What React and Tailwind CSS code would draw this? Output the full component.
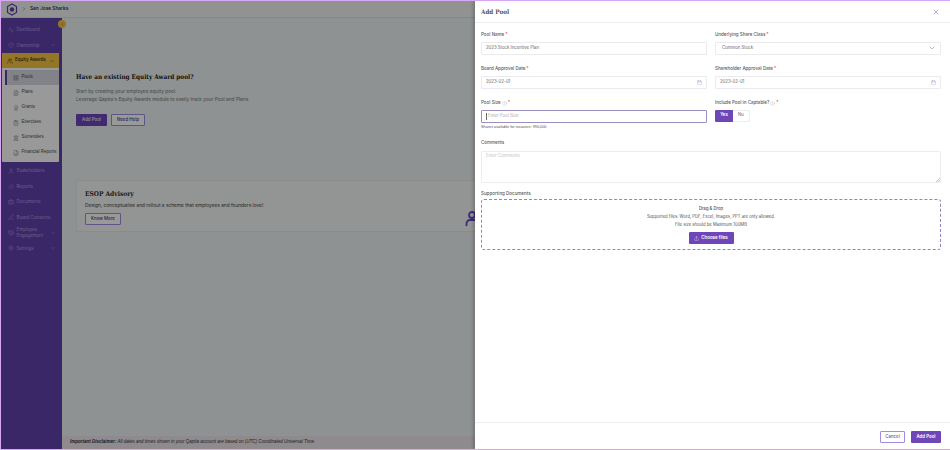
import { Activity, PieChart, Users, LayoutGrid, FileText, Award, ClipboardList, Landmark, FileBarChart, User, BarChart2, Briefcase, PenLine, Handshake, Settings, ChevronDown, ChevronUp, ChevronLeft, ChevronRight, Calendar, X, Upload, HelpCircle } from "lucide-react";

const font = "font-['Inter','Noto_Sans',sans-serif]";
const slab = "font-['DejaVu_Serif_Condensed','DejaVu_Serif',serif]";

function NavItem({ icon: Icon, label, arrow }) {
  return (
    <div className="h-[15.5px] flex items-center pl-[7px] pr-[6px] text-[#b3a0e2]">
      <Icon size={6} strokeWidth={1.5} className="shrink-0" />
      <span className="ml-[2.5px] text-[4.5px] leading-[5.5px] flex-1">{label}</span>
      {arrow && <ChevronDown size={6} strokeWidth={1.5} />}
    </div>
  );
}

function SubItem({ icon: Icon, label, active }) {
  return (
    <div className={`h-[15px] flex items-center pl-[6px] text-[#4a4a55] ${active ? "bg-[#d8dae4] border-l-2 border-[#6141ad]" : "ml-[2px]"}`}>
      <Icon size={6} strokeWidth={1.5} className="shrink-0 text-[#666]" />
      <span className="ml-[2.5px] text-[4.5px] whitespace-nowrap font-['Liberation_Sans',sans-serif]">{label}</span>
    </div>
  );
}

function Label({ children, help, req = true }) {
  return (
    <div className="h-[7px] flex items-center text-[4.5px] font-medium text-[#5a5a5a]">
      {children}
      {help && <HelpCircle size={5} strokeWidth={1} className="ml-[1px] text-[#999]" />}
      {req && <span className="ml-[1px] text-[#e53935]">*</span>}
    </div>
  );
}

function Field({ children, right }) {
  return (
    <div className="mt-[3px] h-[13px] flex items-center justify-between px-[4px] bg-white border border-[#ebebef] rounded-[1px] text-[4.3px] text-[#666]">
      <span>{children}</span>
      {right}
    </div>
  );
}

const cal = <Calendar size={5} strokeWidth={1.2} className="text-[#7f70b5]" />;

export default function App() {
  return (
    <div className={`relative w-[950px] h-[450px] overflow-hidden flex flex-col bg-[#edf3f3] border-[1px] border-r-0 border-[#d9a8f5] ${font}`}>
      <div className="h-[17px] shrink-0 flex items-center pl-[5px] bg-[#f2f6f6] border-b border-[#dde2e2]">
        <svg width="12" height="13" viewBox="0 0 24 26" fill="none" className="text-[#6141ad]">
          <path d="M12 2l9 5v12l-9 5-9-5V7z" stroke="currentColor" strokeWidth="2.4" />
          <circle cx="12" cy="13" r="4.5" fill="currentColor" />
        </svg>
        <ChevronRight size={6} strokeWidth={1.5} className="ml-[3px] text-[#444]" />
        <span className="ml-[3px] text-[4.8px] font-medium text-[#222]">San Jose Sharks</span>
      </div>

      <div className="flex flex-1 min-h-0">
        <aside className="relative w-[61px] shrink-0 bg-[#6141ad] pt-[4px]">
          <div className="absolute right-[-4px] top-[2px] w-[8px] h-[8px] rounded-full bg-[#f5c542] flex items-center justify-center">
            <ChevronLeft size={5} strokeWidth={2} className="text-[#6141ad]" />
          </div>
          <NavItem icon={Activity} label="Dashboard" />
          <NavItem icon={PieChart} label="Ownership" arrow />
          <div className="mx-[1px] mr-[3px] rounded-[1px] overflow-hidden bg-white">
            <div className="h-[15px] flex items-center pl-[5px] pr-[4px] bg-[#f5c542] text-[#3a2b10]">
              <Users size={6} strokeWidth={1.5} />
              <span className="ml-[2px] text-[4.5px] font-medium flex-1">Equity Awards</span>
              <ChevronUp size={6} strokeWidth={1.5} />
            </div>
            <div className="pt-[2px] pb-[2px] pl-[3px]">
              <SubItem icon={LayoutGrid} label="Pools" active />
              <SubItem icon={FileText} label="Plans" />
              <SubItem icon={Award} label="Grants" />
              <SubItem icon={ClipboardList} label="Exercises" />
              <SubItem icon={Landmark} label="Surrenders" />
              <SubItem icon={FileBarChart} label="Financial Reports" />
            </div>
          </div>
          <div className="mt-[1px]">
            <NavItem icon={User} label="Stakeholders" />
            <NavItem icon={BarChart2} label="Reports" />
            <NavItem icon={Briefcase} label="Documents" />
            <NavItem icon={PenLine} label="Board Consents" />
            <NavItem icon={Handshake} label="Employee Engagement" arrow />
            <NavItem icon={Settings} label="Settings" arrow />
          </div>
        </aside>

        <main className="flex-1 flex flex-col min-w-0">
          <div className="flex-1 pl-[14px] pt-[54px]">
            <h2 className={`text-[6.4px] font-bold leading-[11px] text-[#1a1a1a] ${slab}`}>Have an existing Equity Award pool?</h2>
            <p className="mt-[4px] text-[4.8px] leading-[8px] text-[#777]">
              Start by creating your employee equity pool.<br />
              Leverage Qapita's Equity Awards module to easily track your Pool and Plans.
            </p>
            <div className="mt-[11px] flex gap-[4px]">
              <button className="w-[31px] h-[12px] rounded-[1px] bg-[#6f46c0] text-[#eee] text-[4.4px] font-medium">Add Pool</button>
              <button className="w-[34px] h-[12px] rounded-[1px] border border-[#a18ce0] bg-white text-[#4a3a88] text-[4.4px] font-medium">Need Help</button>
            </div>
            <div className="mt-[54px] h-[52px] rounded-[2px] bg-[#f5f7f7] border border-[#e6eaea] pl-[8px] pt-[9px] flex flex-col items-start">
              <h3 className={`text-[6.6px] font-bold leading-[8px] text-[#333] ${slab}`}>ESOP Advisory</h3>
              <p className="mt-[4px] text-[4.8px] leading-[7px] text-[#444]">Design, conceptualise and rollout a scheme that employees and founders love!</p>
              <button className="mt-[4px] w-[36px] h-[12px] rounded-[1px] border border-[#a18ce0] bg-white text-[#4a3a88] text-[4.4px] font-medium">Know More</button>
            </div>
          </div>
          <div className="h-[13px] shrink-0 flex items-center pl-[8px] bg-[#efe6ec] text-[4.5px] italic text-[#333] font-['Liberation_Sans',sans-serif]">
            <span className="font-bold">Important Disclaimer:</span>&nbsp;All dates and times shown in your Qapita account are based on (UTC) Coordinated Universal Time.
          </div>
        </main>
      </div>

      <div className="absolute inset-0 bg-black/40" />
      <svg width="11" height="16" viewBox="0 0 11 16" fill="none" className="absolute left-[464px] top-[210px] text-[#3d2c78]">
        <circle cx="7" cy="4" r="3" stroke="currentColor" strokeWidth="1.8" />
        <path d="M11 9H5C3 9 1.5 10.5 1.5 13v2" stroke="currentColor" strokeWidth="1.8" />
      </svg>

      <section className="absolute left-[474px] top-0 right-0 bottom-0 bg-white shadow-[-2px_0_3px_rgba(0,0,0,0.2)] flex flex-col">
        <header className="h-[22px] shrink-0 flex items-center justify-between pl-[6px] pr-[10px] border-b border-[#eeeeee]">
          <h2 className={`text-[6.3px] font-bold text-[#555] ${slab}`}>Add Pool</h2>
          <X size={8} strokeWidth={1.4} className="text-[#6a58a8]" />
        </header>

        <div className="flex-1 min-h-0 pl-[6px] pr-[9px] pt-[8.5px]">
          <div className="grid grid-cols-2 gap-x-[8px] gap-y-[11px]">
            <div>
              <Label>Pool Name</Label>
              <Field>2023 Stock Incentive Plan</Field>
            </div>
            <div>
              <Label>Underlying Share Class</Label>
              <Field right={<ChevronDown size={8} strokeWidth={1.2} className="text-[#555]" />}>
                <span className="ml-[2px]">Common Stock</span>
              </Field>
            </div>
            <div>
              <Label>Board Approval Date</Label>
              <Field right={cal}>2023-02-01</Field>
            </div>
            <div>
              <Label>Shareholder Approval Date</Label>
              <Field right={cal}>2023-02-01</Field>
            </div>
            <div>
              <Label help>Pool Size</Label>
              <div className="mt-[3px] h-[13px] flex items-center px-[4px] bg-white border border-[#9a8fc0] rounded-[1px] text-[4.3px] text-[#aaa]">
                <span className="w-px h-[7px] bg-[#666] mr-px" />Enter Pool Size
              </div>
              <p className="mt-[1px] text-[3.8px] leading-[6px] text-[#555] font-['Liberation_Sans',sans-serif]">Shares available for issuance: 990,000</p>
            </div>
            <div>
              <Label help>Include Pool in Captable?</Label>
              <div className="mt-[3px] flex h-[12px] w-[35px] text-[4.3px]">
                <span className="w-[18px] flex items-center justify-center bg-[#6f46b8] text-white font-semibold rounded-l-[1px]">Yes</span>
                <span className="flex-1 flex items-center justify-center border border-l-0 border-[#eeeeee] text-[#666]">No</span>
              </div>
            </div>
          </div>

          <div className="mt-[10.5px]">
            <Label req={false}>Comments</Label>
            <div className="relative mt-[4px] h-[32px] px-[4px] pt-[1px] border border-[#ececec] rounded-[1px] text-[4.3px] text-[#c2c2c2]">
              Enter Comments
              <svg width="4" height="4" viewBox="0 0 4 4" className="absolute right-0 bottom-0 text-[#888]">
                <path d="M4 0L0 4M4 2L2 4" stroke="currentColor" strokeWidth="0.5" />
              </svg>
            </div>
          </div>

          <div className="mt-[7.5px]">
            <Label req={false}>Supporting Documents</Label>
            <div className="mt-[1px] h-[51px] pt-[5px] flex flex-col items-center border border-dashed border-[#9484c4] rounded-[3px] text-[#555] text-[4.2px] leading-[7.5px]">
              <p className="font-medium">Drag &amp; Drop</p>
              <p className="mt-[1px]">Supported files: Word, PDF, Excel, Images, PPT are only allowed.</p>
              <p>File size should be Maximum 100MB</p>
              <button className="mt-[4px] w-[45px] h-[12px] flex items-center justify-center gap-[2px] rounded-[1px] bg-[#6f46b8] text-white font-semibold text-[4.4px]">
                <Upload size={5} strokeWidth={1.5} />Choose files
              </button>
            </div>
          </div>
        </div>

        <footer className="h-[27px] shrink-0 flex items-start justify-end gap-[6px] pt-[8px] pr-[9px] border-t border-[#eeeeee]">
          <button className="w-[25px] h-[12px] rounded-[1px] border border-[#a18ce0] bg-white text-[#6a58a8] text-[4.4px] font-medium">Cancel</button>
          <button className="w-[30px] h-[12px] rounded-[1px] bg-[#6f46b8] text-white text-[4.4px] font-semibold">Add Pool</button>
        </footer>
      </section>
    </div>
  );
}
